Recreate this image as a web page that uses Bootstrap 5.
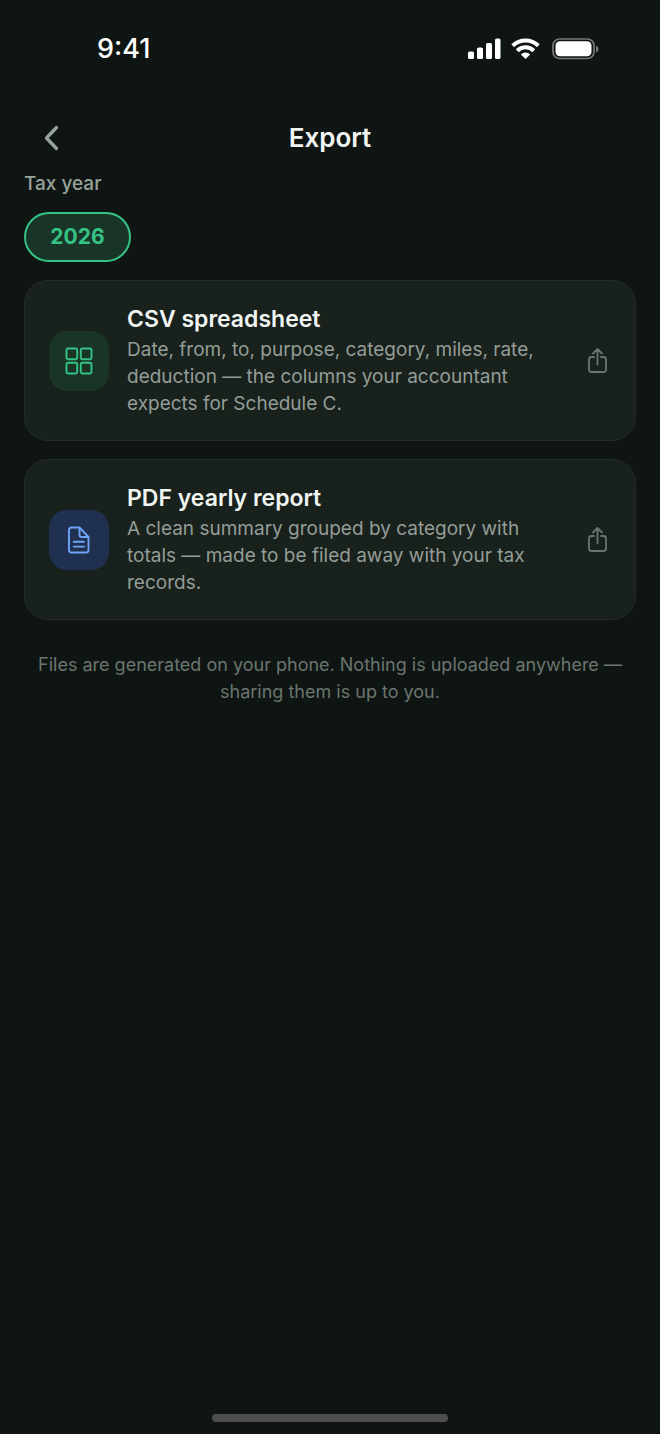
<!DOCTYPE html>
<html lang="en">
<head>
<meta charset="utf-8">
<meta name="viewport" content="width=device-width, initial-scale=1">
<title>Export</title>
<link href="https://cdn.jsdelivr.net/npm/bootstrap@5.3.0/dist/css/bootstrap.min.css" rel="stylesheet">
<style>
  body { background: #0f1513; color: #f1f5f2; font-family: Inter, "Liberation Sans", sans-serif; }
  .status { height: 98px; padding: 0 61px 0 97px; }
  .clock { font-size: 27px; line-height: 32px; font-weight: 500; color: #fff; }
  .screen { padding: 0 24px; }
  .title-bar { height: 72px; margin-top: 4px; display: grid; grid-template-columns: 54px 1fr 54px; }
  .title-bar h1 { font-size: 26px; line-height: 32px; font-weight: 600; }
  .back { color: #98a39c; }
  .year-label { font-size: 19px; line-height: 24px; font-weight: 500; color: #98a39c; margin: -2px 0 16px; }
  .year { width: 107px; height: 50px; border: 2px solid #34c385; border-radius: 25px; background: #193527; color: #34c385; font-size: 21px; line-height: 24px; font-weight: 700; }
  .options { gap: 18px; margin-top: 18px; }
  .option { padding: 24px 24px 23px; gap: 18px; border: 1px solid #242c27; border-radius: 24px; background: #19211d; color: #939d97; }
  .tile { width: 60px; height: 60px; border-radius: 18px; }
  .tile-csv { background: #193527; color: #34c385; }
  .tile-pdf { background: #203050; color: #6ca5f8; }
  .option-title { font-size: 23px; line-height: 29px; font-weight: 600; color: #f1f5f2; margin-bottom: 2px; }
  .option-text { font-size: 19px; line-height: 27px; }
  .share { color: #6b756f; margin-left: 10px; }
  .note { font-size: 18px; line-height: 27px; color: #6b756f; margin-top: 31px; }
  .home-bar { width: 236px; height: 8px; border-radius: 4px; background: #4d4d4d; margin-bottom: 12px; }
</style>
</head>
<body>
<div class="d-flex flex-column min-vh-100">
  <header class="status d-flex justify-content-between align-items-center">
    <time class="clock">9:41</time>
    <div class="d-flex align-items-center gap-2" aria-hidden="true">
      <svg width="36" height="22" viewBox="0 0 36 22" fill="#fff"><rect x="2" y="13.500" width="6" height="7.500" rx="1.600"/><rect x="11" y="9.500" width="6" height="11.500" rx="1.600"/><rect x="20" y="5" width="6" height="16" rx="1.600"/><rect x="29" y="0.500" width="5.500" height="20.500" rx="1.600"/></svg>
      <svg width="30" height="22" viewBox="0 0 30 22" fill="none" stroke="#fff" stroke-width="4"><path d="M2.700 7.700a18.500 18.500 0 0 1 25.600 0M7.200 12.700a12 12 0 0 1 16.600 0"/><path d="M15.500 21l-4.700-4.500a6.800 6.800 0 0 1 9.400 0z" fill="#fff" stroke="none"/></svg>
      <svg class="ms-1" width="47" height="22" viewBox="0 0 47 22"><rect x="1" y="1" width="41" height="19.500" rx="6.500" fill="none" stroke="#747775" stroke-width="1.700"/><rect x="3.500" y="3.300" width="36" height="15" rx="4.500" fill="#fff"/><path d="M44 7.500q2.600 1 2.600 3.500t-2.600 3.500z" fill="#747775"/></svg>
    </div>
  </header>

  <main class="screen flex-grow-1">
    <div class="title-bar align-items-center">
      <button type="button" class="back btn border-0 p-0" aria-label="Back">
        <svg class="d-block mx-auto" width="20" height="28" viewBox="0 0 20 28" fill="none" stroke="currentColor" stroke-width="3.300" stroke-linecap="round" stroke-linejoin="round"><path d="M15.500 3.500L5.500 14l10 10.500"/></svg>
      </button>
      <h1 class="m-0 text-center">Export</h1>
    </div>

    <h2 id="tax-year" class="year-label">Tax year</h2>
    <div class="d-flex" role="group" aria-labelledby="tax-year">
      <button type="button" class="year p-0" aria-pressed="true">2026</button>
    </div>

    <div class="options d-flex flex-column">
      <button type="button" class="option d-flex align-items-center text-start w-100">
        <span class="tile tile-csv d-flex flex-shrink-0 align-items-center justify-content-center">
          <svg width="30" height="30" viewBox="0 0 30 30" fill="none" stroke="currentColor" stroke-width="1.900"><rect x="2.500" y="2.500" width="10.700" height="10.700" rx="1.500"/><rect x="16.800" y="2.500" width="10.700" height="10.700" rx="1.500"/><rect x="2.500" y="16.800" width="10.700" height="10.700" rx="1.500"/><rect x="16.800" y="16.800" width="10.700" height="10.700" rx="1.500"/></svg>
        </span>
        <span class="flex-grow-1">
          <span class="option-title d-block">CSV spreadsheet</span>
          <span class="option-text d-block">Date, from, to, purpose, category, miles, rate, deduction — the columns your accountant expects for Schedule C.</span>
        </span>
        <svg class="share flex-shrink-0" width="27" height="28" viewBox="0 0 27 28" fill="none" stroke="currentColor" stroke-width="1.800" stroke-linecap="round" stroke-linejoin="round"><path d="M10 10H7.500a2.500 2.500 0 0 0-2.500 2.500v10a2.500 2.500 0 0 0 2.500 2.500h12a2.500 2.500 0 0 0 2.500-2.500v-10a2.500 2.500 0 0 0-2.500-2.500h-2.500M13.500 17.500V2.300M9 6.500l4.500-4.500L18 6.500"/></svg>
      </button>

      <button type="button" class="option d-flex align-items-center text-start w-100">
        <span class="tile tile-pdf d-flex flex-shrink-0 align-items-center justify-content-center">
          <svg width="30" height="30" viewBox="0 0 30 30" fill="none" stroke="currentColor" stroke-width="1.900" stroke-linecap="round" stroke-linejoin="round"><path d="M15.500 2.500H7.500A2.500 2.500 0 0 0 5 5v20A2.500 2.500 0 0 0 7.500 27.500h14.500A2.500 2.500 0 0 0 24.500 25V12zM15.500 2.500v7.500A2 2 0 0 0 17.500 12h7M9.700 16.800h10.300M9.700 21.600h10.300"/></svg>
        </span>
        <span class="flex-grow-1">
          <span class="option-title d-block">PDF yearly report</span>
          <span class="option-text d-block">A clean summary grouped by category with totals — made to be filed away with your tax records.</span>
        </span>
        <svg class="share flex-shrink-0" width="27" height="28" viewBox="0 0 27 28" fill="none" stroke="currentColor" stroke-width="1.800" stroke-linecap="round" stroke-linejoin="round"><path d="M10 10H7.500a2.500 2.500 0 0 0-2.500 2.500v10a2.500 2.500 0 0 0 2.500 2.500h12a2.500 2.500 0 0 0 2.500-2.500v-10a2.500 2.500 0 0 0-2.500-2.500h-2.500M13.500 17.500V2.300M9 6.500l4.500-4.500L18 6.500"/></svg>
      </button>
    </div>

    <p class="note text-center mb-0">Files are generated on your phone. Nothing is uploaded anywhere — sharing them is up to you.</p>
  </main>

  <div class="home-bar align-self-center" aria-hidden="true"></div>
</div>
<script src="https://cdn.jsdelivr.net/npm/bootstrap@5.3.0/dist/js/bootstrap.bundle.min.js"></script>
</body>
</html>
